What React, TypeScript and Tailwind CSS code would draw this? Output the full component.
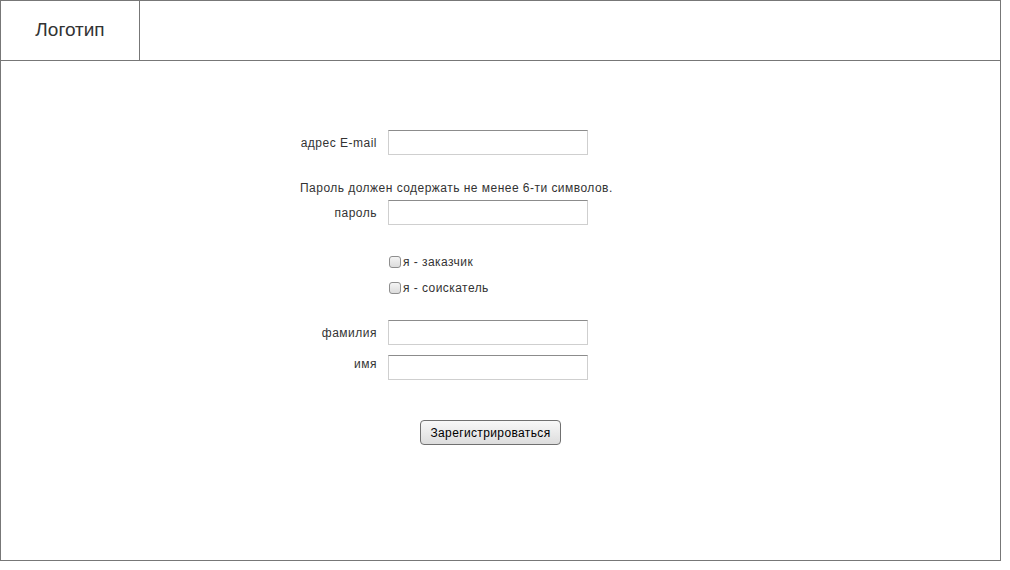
import React from 'react';

const Field: React.FC<{ label: string; className?: string; labelClass?: string }> = ({ label, className, labelClass }) => (
  <div className={`flex items-center ${className ?? ''}`}>
    <label className={`w-[77px] text-right text-[12px] leading-[14px] tracking-[0.5px] text-[#333] ${labelClass ?? ''}`}>{label}</label>
    <input
      type="text"
      className="ml-[11px] h-[25px] w-[200px] border border-[#cfcfcf] border-t-[#8c8c8c] bg-white outline-none"
    />
  </div>
);

const Check: React.FC<{ label: string }> = ({ label }) => (
  <div className="flex h-[26px] items-center pl-[89px]">
    <span className="h-[12px] w-[12px] rounded-[3px] border border-[#8e8e8e] bg-gradient-to-b from-[#f4f4f4] to-[#dcdcdc]" />
    <span className="ml-[2px] text-[12px] leading-[14px] tracking-[0.45px] text-[#333]">{label}</span>
  </div>
);

export default function App() {
  return (
    <div className="flex h-[561px] w-[1001px] flex-col border border-[#777] bg-white font-['Liberation_Sans',Arial,sans-serif]">
      <div className="flex h-[60px] shrink-0 border-b border-[#777]">
        <div className="flex w-[139px] items-center justify-center border-r border-[#777] pb-[1px] text-[19px] text-[#333]">
          Логотип
        </div>
        <div className="flex-1" />
      </div>
      <div className="flex-1 pl-[299px] pt-[69px]">
        <Field label="адрес E-mail" />
        <p className="mt-[26px] whitespace-nowrap text-[12px] leading-[14px] tracking-[0.47px] text-[#333]">
          Пароль должен содержать не менее 6-ти символов.
        </p>
        <Field label="пароль" className="mt-[5px]" />
        <div className="mt-[24px]">
          <Check label="я - заказчик" />
          <Check label="я - соискатель" />
        </div>
        <Field label="фамилия" className="mt-[19px]" />
        <Field label="имя" className="mt-[10px]" labelClass="pb-[7px]" />
        <button
          type="button"
          className="ml-[120px] mt-[40px] h-[25px] w-[141px] rounded-[4px] border border-[#707070] bg-gradient-to-b from-[#f8f8f8] to-[#dddddd] text-[12px] tracking-[0.37px] text-black"
        >
          Зарегистрироваться
        </button>
      </div>
    </div>
  );
}
